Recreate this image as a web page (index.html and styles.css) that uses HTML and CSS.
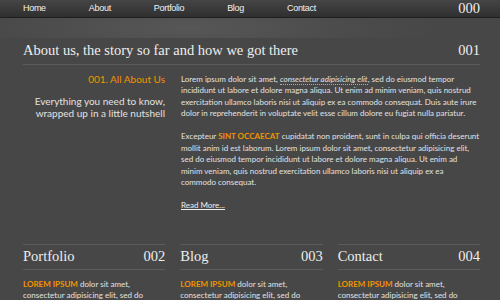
FILE: index.html
```
<!DOCTYPE html>
<html lang="en">
<head>
    <meta charset="UTF-8">
    <meta name="viewport" content="width=device-width, initial-scale=1.0">
    <title>About us</title>
    <link rel="stylesheet" href="styles.css">
</head>
<body>
    <div class="topbar">
        <div class="container nav">
            <a href="#">Home</a>
            <a href="#">About</a>
            <a href="#">Portfolio</a>
            <a href="#">Blog</a>
            <a href="#">Contact</a>
            <span class="num">000</span>
        </div>
    </div>
    <div class="band"></div>

    <div class="container">
        <div class="section-head">
            <h1>About us, the story so far and how we got there</h1>
            <span class="num">001</span>
        </div>

        <div class="about">
            <div class="about-side">
                <h3>001. All About Us</h3>
                <p>Everything you need to know, wrapped up in a little nutshell</p>
            </div>
            <div class="about-text">
                <p>Lorem ipsum dolor sit amet, <abbr>consectetur adipisicing elit</abbr>, sed do eiusmod tempor incididunt ut labore et dolore magna aliqua. Ut enim ad minim veniam, quis nostrud exercitation ullamco laboris nisi ut aliquip ex ea commodo consequat. Duis aute irure dolor in reprehenderit in voluptate velit esse cillum dolore eu fugiat nulla pariatur.</p>
                <p>Excepteur <strong>SINT OCCAECAT</strong> cupidatat non proident, sunt in culpa qui officia deserunt mollit anim id est laborum. Lorem ipsum dolor sit amet, consectetur adipisicing elit, sed do eiusmod tempor incididunt ut labore et dolore magna aliqua. Ut enim ad minim veniam, quis nostrud exercitation ullamco laboris nisi ut aliquip ex ea commodo consequat.</p>
                <a href="#" class="more">Read More...</a>
            </div>
        </div>

        <div class="columns">
            <div class="col">
                <div class="col-head"><h2>Portfolio</h2><span class="num">002</span></div>
                <p><strong>LOREM IPSUM</strong> dolor sit amet, consectetur adipisicing elit, sed do eiusmod tempor incididunt ut labore.</p>
            </div>
            <div class="col">
                <div class="col-head"><h2>Blog</h2><span class="num">003</span></div>
                <p><strong>LOREM IPSUM</strong> dolor sit amet, consectetur adipisicing elit, sed do eiusmod tempor incididunt ut labore.</p>
            </div>
            <div class="col">
                <div class="col-head"><h2>Contact</h2><span class="num">004</span></div>
                <p><strong>LOREM IPSUM</strong> dolor sit amet, consectetur adipisicing elit, sed do eiusmod tempor incididunt ut labore.</p>
            </div>
        </div>
    </div>
</body>
</html>
```

FILE: styles.css
```
body {
    margin: 0;
    background-color: #474747;
    color: #e2e2e2;
    font-family: Lato, "Open Sans", sans-serif;
    font-size: 8px;
    line-height: 11.5px;
}
.container {
    width: 457px;
    margin-left: 23px;
}
.topbar {
    height: 17px;
    background: linear-gradient(#454545, #2f2f2f);
    border-bottom: 1px solid #1f1f1f;
}
.nav {
    display: flex;
    align-items: center;
    gap: 43px;
    height: 17px;
}
.nav a {
    font-family: "Liberation Sans", Arial, sans-serif;
    font-size: 9px;
    letter-spacing: -0.3px;
    color: #f2f2f2;
    text-decoration: none;
    padding-top: 1px;
}
.num {
    font-family: "Liberation Serif", "Times New Roman", serif;
    font-size: 14.5px;
    color: #eee;
    margin-left: auto;
}
.band {
    height: 20px;
    background: radial-gradient(ellipse 260px 40px at 190px 10px, #575757, #4a4a4a 70%, #474747);
}
.section-head, .col-head {
    display: flex;
    align-items: center;
    border-bottom: 1px solid #5b5b5b;
}
.section-head {
    height: 26px;
}
h1, h2 {
    margin: 0;
    font-family: "Liberation Serif", "Times New Roman", serif;
    font-weight: normal;
    font-size: 14.5px;
    color: #eee;
}
.about {
    display: grid;
    grid-template-columns: 142px 1fr;
    gap: 16px;
    padding-top: 8.5px;
}
.about-side {
    text-align: right;
}
.about-side h3 {
    margin: 0 0 10px;
    font-size: 10px;
    font-weight: normal;
    color: #f29400;
}
.about-side p {
    margin: 0;
    font-size: 10px;
    line-height: 12px;
}
.about-text p {
    margin: 0 0 11.5px;
}
abbr {
    font-style: italic;
    text-decoration: none;
    border-bottom: 1px dotted #aaa;
}
strong {
    color: #f29400;
    font-weight: bold;
}
.more {
    color: #eee;
}
.columns {
    display: grid;
    grid-template-columns: repeat(3, 1fr);
    gap: 15px;
    margin-top: 32px;
}
.col-head {
    height: 24px;
    border-top: 1px solid #5b5b5b;
}
.col p {
    margin: 9px 0 0;
}
```
